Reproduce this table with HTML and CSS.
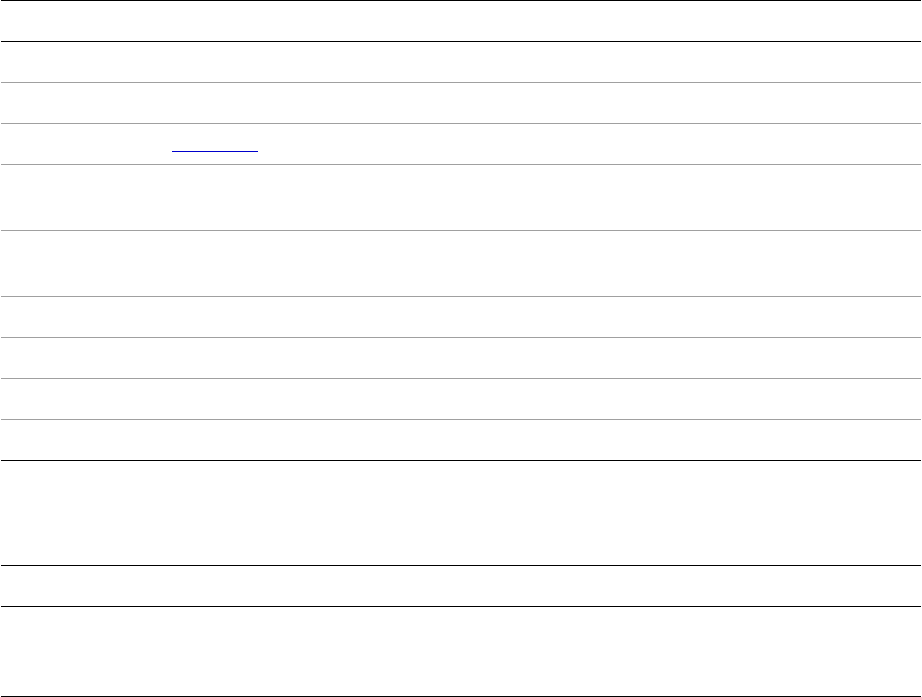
FILE: index.html
```html
<!DOCTYPE html>
<html lang="en">
<head>
<meta charset="utf-8">
<title>Table</title>
<link rel="stylesheet" href="styles.css">
</head>
<body>
<div class="sheet">
  <div class="row head"></div>
  <div class="row r41 dark-line"></div>
  <div class="row r41"></div>
  <div class="row r41"></div>
  <div class="row r41 gap"><a class="link" href="#" aria-label="link"></a></div>
  <div class="row r66"></div>
  <div class="row r66"></div>
  <div class="row r41"></div>
  <div class="row r41"></div>
  <div class="row r41"></div>
  <div class="row r41 dark-line"></div>
  <div class="row r105 dark-line"></div>
  <div class="row r41 dark-line"></div>
  <div class="row r90 dark-line"></div>
</div>
</body>
</html>
```
FILE: styles.css
```css
html, body {
  margin: 0;
  padding: 0;
  background: #ffffff;
  font-family: "Liberation Sans", Arial, sans-serif;
}

.sheet {
  display: flex;
  flex-direction: column;
  margin: 0 1px;
  width: 920px;
}

.row {
  box-sizing: border-box;
  border-bottom: 1px solid #a0a0a0;
}

.row.head {
  height: 1px;
  border-bottom-color: #000000;
}

.row.dark-line {
  border-bottom-color: #000000;
}

.r41 { height: 41px; }
.r66 { height: 66px; }
.r105 { height: 105px; }
.r90 { height: 90px; }

.gap {
  display: flex;
  flex-direction: column;
  padding-top: 27px;
}

.link {
  display: block;
  margin-left: 171px;
  width: 86px;
  height: 0;
  border-bottom: 1px solid #0000cc;
}
```
